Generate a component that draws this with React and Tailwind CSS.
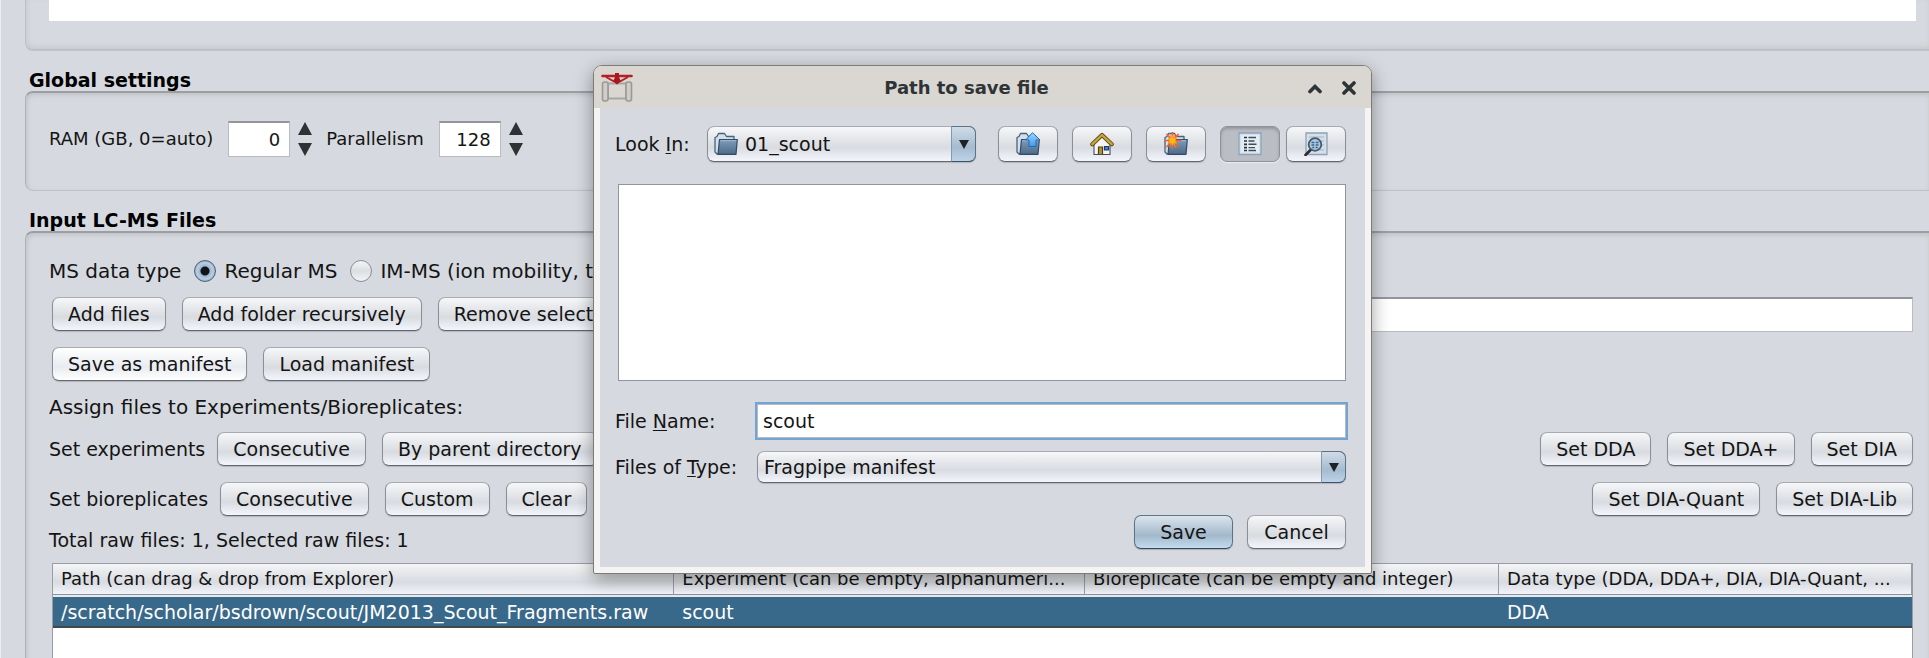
import React from "react";

const buttonFace =
  "rounded-[7px] border border-[#8c8f96] border-t-[#a9abb0] border-b-[#63666c] bg-linear-to-b from-[#f6f7f9] via-[#d8dbe0] via-60% to-[#f4f6fd] shadow-[0_1px_1px_#b3b6bd]";

function Button({ children, className = "" }) {
  return (
    <button type="button" className={`h-[34px] shrink-0 px-[15px] whitespace-nowrap ${buttonFace} ${className}`}>
      {children}
    </button>
  );
}

function Group({ title, children, className = "" }) {
  return (
    <section className={`flex flex-col ${className}`}>
      <h2 className="flex h-10 items-end pb-px pl-[29px] text-[19px] leading-5 font-bold text-black">{title}</h2>
      <div className="ml-[25px] flex flex-1 flex-col rounded-l-[8px] border-t-2 border-b border-l border-t-[#9c9ea4] border-b-[#bfc1c6] border-l-[#b0b2b7] pr-4 pl-[23px] shadow-[inset_1px_2px_5px_#c0c1c4]">
        {children}
      </div>
    </section>
  );
}

function Spinner({ id, label, value }) {
  return (
    <div className="flex items-center">
      <label htmlFor={id} className="whitespace-nowrap">{label}</label>
      <input
        id={id}
        type="text"
        inputMode="numeric"
        defaultValue={value}
        className="ml-[15px] h-9 w-[62px] border border-t-2 border-[#b9bbbf] border-t-[#94969b] bg-white pr-[9px] text-right outline-none"
      />
      <div className="ml-2 flex flex-col gap-2">
        <button type="button" aria-label={`Increase ${label}`} className="block">
          <svg width="14" height="13" viewBox="0 0 14 13"><path d="M7 0 14 13H0Z" fill="#2f3134" /></svg>
        </button>
        <button type="button" aria-label={`Decrease ${label}`} className="block">
          <svg width="14" height="13" viewBox="0 0 14 13"><path d="M0 0H14L7 13Z" fill="#2f3134" /></svg>
        </button>
      </div>
    </div>
  );
}

function Radio({ label, checked }) {
  return (
    <label className="flex items-center gap-2 whitespace-nowrap">
      <input
        type="radio"
        name="ms-type"
        defaultChecked={checked}
        className="size-[22px] appearance-none rounded-full border border-[#8b8e94] bg-linear-to-b from-[#f4f5f7] via-[#dbdee3] to-[#f2f4f9] checked:border-[#4b6279] checked:bg-[radial-gradient(circle,#111418_0_4px,#9db4ca_5px,#b9cee2_8px,#8fa9c1_11px)]"
      />
      {label}
    </label>
  );
}

function FolderShape() {
  return (
    <>
      <path d="M1 20V5.500L3 4.500 4.500 1.500H10.500L12.500 4.500H20V9H7L5 22H3Z" fill="#d3dfea" stroke="#48637d" strokeWidth="1.300" strokeLinejoin="round" />
      <path d="M5.500 7.500H23.300L22 22.300H4Z" fill="url(#folderFill)" stroke="#324b64" strokeWidth="1.200" strokeLinejoin="round" />
      <path d="M6.500 8.700H22.300" stroke="#9fb9d1" strokeWidth="1" />
    </>
  );
}

function Icon({ children }) {
  return <svg width="24" height="24" viewBox="0 0 24 24" fill="none" aria-hidden="true">{children}</svg>;
}

function Defs() {
  return (
    <defs>
      <linearGradient id="folderFill" x1="0" y1="0" x2="0" y2="1">
        <stop offset="0" stopColor="#7f9db9" />
        <stop offset="1" stopColor="#4c6a88" />
      </linearGradient>
      <linearGradient id="arrowFill" x1="0" y1="0" x2="0" y2="1">
        <stop offset="0" stopColor="#9fd4ff" />
        <stop offset="1" stopColor="#3d9bee" />
      </linearGradient>
    </defs>
  );
}

function FolderIcon() {
  return <Icon><Defs /><FolderShape /></Icon>;
}

function UpFolderIcon() {
  return (
    <Icon>
      <FolderShape />
      <path d="M16.500 .700 24 8H20V14.500H13V8H9.500Z" fill="url(#arrowFill)" stroke="#2569ab" strokeWidth="1" strokeLinejoin="round" />
    </Icon>
  );
}

function HomeIcon() {
  return (
    <Icon>
      <path d="M4 11 12 4 20 11V22.500H4Z" fill="#f4f4f6" stroke="#4a4d52" strokeWidth="1.100" />
      <path d="M8.500 22V15H12.500V22" fill="#b79436" stroke="#4f3f14" strokeWidth="1.200" />
      <path d="M14.500 14.500H18.500V18H14.500Z" fill="#4a86c4" stroke="#173c66" strokeWidth="1.200" />
      <path d="M2.300 12.300 12 3 21.700 12.300" stroke="#5f4c12" strokeWidth="4.200" strokeLinecap="round" strokeLinejoin="round" />
      <path d="M2.300 12.200 12 3 21.700 12.200" stroke="#c3a541" strokeWidth="2.400" strokeLinecap="round" strokeLinejoin="round" />
    </Icon>
  );
}

function NewFolderIcon() {
  return (
    <Icon>
      <FolderShape />
      <path d="M8.500 .500V16.500M.800 8.500H16.500M3 2.500 14 14.500M14 2.500 3 14.500" stroke="#f4622a" strokeWidth="1.700" strokeLinecap="round" />
      <path d="M5.500 1.500 11.500 15.500M11.500 1.500 5.500 15.500" stroke="#f98a45" strokeWidth=".9" />
      <path d="M8.500 3.500 10 6 12.500 6 11.500 8.500 12.500 11.500 10 11 8.500 13.500 7 11 4.500 11.500 5.500 8.500 4.500 6 7 6Z" fill="#ffb911" stroke="#fb8c1e" strokeWidth=".8" />
    </Icon>
  );
}

function ListIcon() {
  return (
    <Icon>
      <path d="M1 1H23V22.500H1Z" fill="#d3e0eb" stroke="#8ea3b7" strokeWidth="1.300" />
      <path d="M3 3H21V20.500H3Z" fill="#edf3f8" opacity=".6" />
      <path d="M6 5.500H9M6 9H9M6 12.300H9M6 15.600H9M6 18.500H9" stroke="#2a3138" strokeWidth="1.700" />
      <path d="M10.500 5.500H18M10.500 9H16.500M10.500 12.300H18.500M10.500 15.600H17M10.500 18.500H18" stroke="#424b54" strokeWidth="1.400" />
    </Icon>
  );
}

function DetailsIcon() {
  return (
    <Icon>
      <path d="M2 1H23V22.500H2Z" fill="#d3e0eb" stroke="#8ea3b7" strokeWidth="1.300" />
      <path d="M5 5H20M17 9H20M17 13H20M12 18H20" stroke="#a3b4c4" strokeWidth="1.200" />
      <path d="M7 17.500 1.500 23" stroke="#2b2d30" strokeWidth="2.600" strokeLinecap="round" />
      <circle cx="11" cy="12.500" r="6.300" fill="#a9c9e4" stroke="#4c5965" strokeWidth="1.800" />
      <path d="M7.500 10.500H10.300M11.700 10.500H14.500M7.500 13H10.300M11.700 13H14.500M8.300 15.500H10.300M11.700 15.500H13.700" stroke="#3e6488" strokeWidth="1.500" />
    </Icon>
  );
}

function AppLogo() {
  return (
    <svg width="32" height="30" viewBox="0 0 32 30" fill="none" aria-hidden="true">
      <path d="M7 10.500H25V25.500H7Z" fill="#dad6d2" stroke="#a9a7a4" strokeWidth="2" />
      <rect x="1.500" y="9" width="5.500" height="19" rx="2" fill="#d0cdc9" stroke="#9b9996" strokeWidth="1.600" />
      <rect x="25" y="9" width="5.500" height="19" rx="2" fill="#d0cdc9" stroke="#9b9996" strokeWidth="1.600" />
      <path d="M1.500 3H30.500" stroke="#b31f22" strokeWidth="2.600" strokeLinecap="round" />
      <path d="M5 4 13 8.500M27 4 19 8.500" stroke="#b31f22" strokeWidth="2" />
      <path d="M14 0H18V4L20 8.500 16 11.500 12 8.500 14 4Z" fill="#a8191d" />
    </svg>
  );
}

function ComboBox({ id, options, icon, className = "" }) {
  return (
    <div className={`relative ${className}`}>
      <select id={id} className={`h-full w-full appearance-none pr-8 leading-7 outline-none ${icon ? "pl-[37px]" : "pl-[6px]"} ${buttonFace}`}>
        {options.map((o) => <option key={o}>{o}</option>)}
      </select>
      {icon && <span className="pointer-events-none absolute top-1/2 left-[7px] -translate-y-1/2">{icon}</span>}
      <span className="pointer-events-none absolute inset-y-0 right-0 flex w-[25px] items-center justify-center rounded-r-[7px] border border-[#5b7288] border-l-[#8399ad] border-b-[#3c5266] bg-linear-to-b from-[#d0dce7] via-[#a5bbcf] via-60% to-[#bdd3e7]">
        <svg width="10" height="9" viewBox="0 0 10 9"><path d="M0 0H10L5 9Z" fill="#1e2226" /></svg>
      </span>
    </div>
  );
}

function ToolButton({ label, pressed, children }) {
  return (
    <button
      type="button"
      aria-label={label}
      aria-pressed={pressed}
      className={`flex h-9 w-[60px] shrink-0 items-center justify-center ${
        pressed
          ? "rounded-[7px] border border-[#8f9197] bg-[#bbbdc4] shadow-[inset_0_2px_3px_#94969b,0_1px_1px_#eceef2]"
          : buttonFace
      }`}
    >
      {children}
    </button>
  );
}

function SaveDialog() {
  return (
    <div
      role="dialog"
      aria-labelledby="dialog-title"
      className="absolute top-[65px] left-[592px] flex w-[779px] flex-col rounded-t-[9px] rounded-b-[2px] border border-[#7b7b78] bg-[#f5f4f2] shadow-[0_5px_18px_rgba(0,0,0,0.38)]"
    >
      <header className="flex h-[42px] items-center rounded-t-[8px] bg-[#dad6d2] px-[7px] pt-0.5">
        <div className="flex w-[54px]"><AppLogo /></div>
        <h1 id="dialog-title" className="flex-1 text-center text-[18px] leading-5 font-bold text-[#2e3436]">Path to save file</h1>
        <div className="flex w-[86px] items-center justify-end gap-5 pr-2">
          <button type="button" aria-label="Roll up">
            <svg width="14" height="14" viewBox="0 0 14 14" fill="none"><path d="M2 10.500 7 5.500 12 10.500" stroke="#2e3436" strokeWidth="3.600" strokeLinecap="round" /></svg>
          </button>
          <button type="button" aria-label="Close">
            <svg width="14" height="14" viewBox="0 0 14 14" fill="none"><path d="M2 2 12 12M12 2 2 12" stroke="#2e3436" strokeWidth="3.600" strokeLinecap="round" /></svg>
          </button>
        </div>
      </header>
      <div className="mx-[6px] mb-[6px] flex flex-col bg-[#d6d9df] pt-[18px] pr-[19px] pb-[18px] pl-[15px]">
        <div className="flex items-center">
          <label htmlFor="look-in" className="w-[92px] whitespace-nowrap">Look <u className="underline-offset-2">I</u>n:</label>
          <ComboBox id="look-in" options={["01_scout"]} icon={<FolderIcon />} className="h-9 flex-1" />
          <div className="ml-[22px] flex gap-[14px]">
            <ToolButton label="Up one level"><UpFolderIcon /></ToolButton>
            <ToolButton label="Home"><HomeIcon /></ToolButton>
            <ToolButton label="Create new folder"><NewFolderIcon /></ToolButton>
            <div className="flex gap-[6px]">
              <ToolButton label="List" pressed><ListIcon /></ToolButton>
              <ToolButton label="Details"><DetailsIcon /></ToolButton>
            </div>
          </div>
        </div>
        <div className="mt-[22px] ml-[3px] h-[197px] border border-[#9194a0] bg-white" />
        <div className="mt-[22px] flex h-9 items-center">
          <label htmlFor="file-name" className="w-[142px] whitespace-nowrap">File <u className="underline-offset-2">N</u>ame:</label>
          <input
            id="file-name"
            type="text"
            defaultValue="scout"
            className="h-[34px] min-w-0 flex-1 border border-[#b5bcc6] bg-white pl-[5px] shadow-[0_0_0_2px_#73a4d1] outline-none"
          />
        </div>
        <div className="mt-3 flex h-8 items-center">
          <label htmlFor="file-type" className="w-[142px] whitespace-nowrap">Files of <u className="underline-offset-2">T</u>ype:</label>
          <ComboBox id="file-type" options={["Fragpipe manifest"]} className="h-8 flex-1" />
        </div>
        <div className="mt-8 flex justify-end gap-[14px]">
          <button type="button" className="h-[34px] w-[99px] rounded-[7px] border border-[#5d7387] border-b-[#34495c] bg-linear-to-b from-[#dce5ed] via-[#a2b8cb] via-60% to-[#c4daee] shadow-[0_1px_1px_#a9adb5]">Save</button>
          <button type="button" className={`h-[34px] w-[99px] ${buttonFace}`}>Cancel</button>
        </div>
      </div>
    </div>
  );
}

const headCell =
  "h-[31px] border-r border-b border-[#9a9da3] border-b-[#8d9096] pl-2 text-left text-[18px] leading-5 font-normal whitespace-nowrap overflow-hidden bg-linear-to-b from-[#f4f5f7] via-[#d8dbe0] via-60% to-[#f2f4fb]";
const bodyCell =
  "h-[33px] border-t-2 border-b-2 border-t-[#e6e9ee] border-b-[#45474d] bg-[#39698a] pl-2 whitespace-nowrap overflow-hidden";

export default function App() {
  return (
    <div className="relative flex min-h-screen flex-col overflow-hidden border-l border-[#eceef1] bg-[#d6d9df] font-['DejaVu_Sans','Liberation_Sans',sans-serif] text-[19px] leading-5 text-[#141414]">
      <div className="-ml-px flex flex-1 flex-col">
        <div className="ml-[25px] rounded-bl-[8px] border-b-2 border-l border-[#bfc1c6] pr-[13px] pb-7 pl-[23px] shadow-[inset_1px_-2px_5px_#c6c8cb]">
          <div className="h-[21px] bg-white" />
        </div>

        <Group title="Global settings">
          <div className="flex items-center gap-[14px] pt-7 pb-[33px] text-[18px] leading-5">
            <Spinner id="ram" label="RAM (GB, 0=auto)" value="0" />
            <Spinner id="parallelism" label="Parallelism" value="128" />
          </div>
        </Group>

        <Group title="Input LC-MS Files" className="-mb-4 flex-1">
          <div role="radiogroup" aria-labelledby="ms-type-label" className="mt-5 flex h-9 items-center gap-[13px] text-[20px] leading-5">
            <span id="ms-type-label" className="whitespace-nowrap">MS data type</span>
            <Radio label="Regular MS" checked />
            <Radio label="IM-MS (ion mobility, timsTOF only)" />
          </div>
          <div className="flex h-[50px] items-center gap-4 pl-[3px]">
            <Button>Add files</Button>
            <Button>Add folder recursively</Button>
            <Button>Remove selected files</Button>
            <input
              type="text"
              aria-label="File filter"
              className="ml-auto h-[35px] min-w-0 flex-1 border border-t-2 border-[#b9bbbf] border-t-[#94969b] bg-white px-2 outline-none"
            />
          </div>
          <div className="flex h-[50px] items-center gap-4 pl-[3px]">
            <Button className="from-white via-[#e8ebf0] to-white">Save as manifest</Button>
            <Button>Load manifest</Button>
          </div>
          <p className="flex h-[35px] items-center text-[20px] leading-5">Assign files to Experiments/Bioreplicates:</p>
          <div className="flex h-[50px] items-center gap-4">
            <span className="-mr-1 whitespace-nowrap">Set experiments</span>
            <Button>Consecutive</Button>
            <Button>By parent directory</Button>
            <div className="ml-auto flex gap-4">
              <Button>Set DDA</Button>
              <Button>Set DDA+</Button>
              <Button>Set DIA</Button>
            </div>
          </div>
          <div className="flex h-[50px] items-center gap-4">
            <span className="-mr-1 whitespace-nowrap">Set bioreplicates</span>
            <Button>Consecutive</Button>
            <Button>Custom</Button>
            <Button>Clear</Button>
            <div className="ml-auto flex gap-4">
              <Button>Set DIA-Quant</Button>
              <Button>Set DIA-Lib</Button>
            </div>
          </div>
          <p className="flex h-8 items-center">Total raw files: 1, Selected raw files: 1</p>
          <div className="mt-[7px] ml-[3px] flex-1 border border-[#9a9da6] bg-white">
            <table className="w-full table-fixed border-separate border-spacing-0">
              <colgroup>
                <col className="w-[33.420%]" />
                <col className="w-[22.100%]" />
                <col className="w-[22.260%]" />
                <col />
              </colgroup>
              <thead>
                <tr>
                  <th className={headCell}>Path (can drag &amp; drop from Explorer)</th>
                  <th className={headCell}>Experiment (can be empty, alphanumeri...</th>
                  <th className={headCell}>Bioreplicate (can be empty and integer)</th>
                  <th className={headCell}>Data type (DDA, DDA+, DIA, DIA-Quant, ...</th>
                </tr>
              </thead>
              <tbody>
                <tr className="text-white">
                  <td className={bodyCell}>/scratch/scholar/bsdrown/scout/JM2013_Scout_Fragments.raw</td>
                  <td className={bodyCell}>scout</td>
                  <td className={bodyCell} />
                  <td className={bodyCell}>DDA</td>
                </tr>
              </tbody>
            </table>
          </div>
        </Group>
      </div>
      <SaveDialog />
    </div>
  );
}
